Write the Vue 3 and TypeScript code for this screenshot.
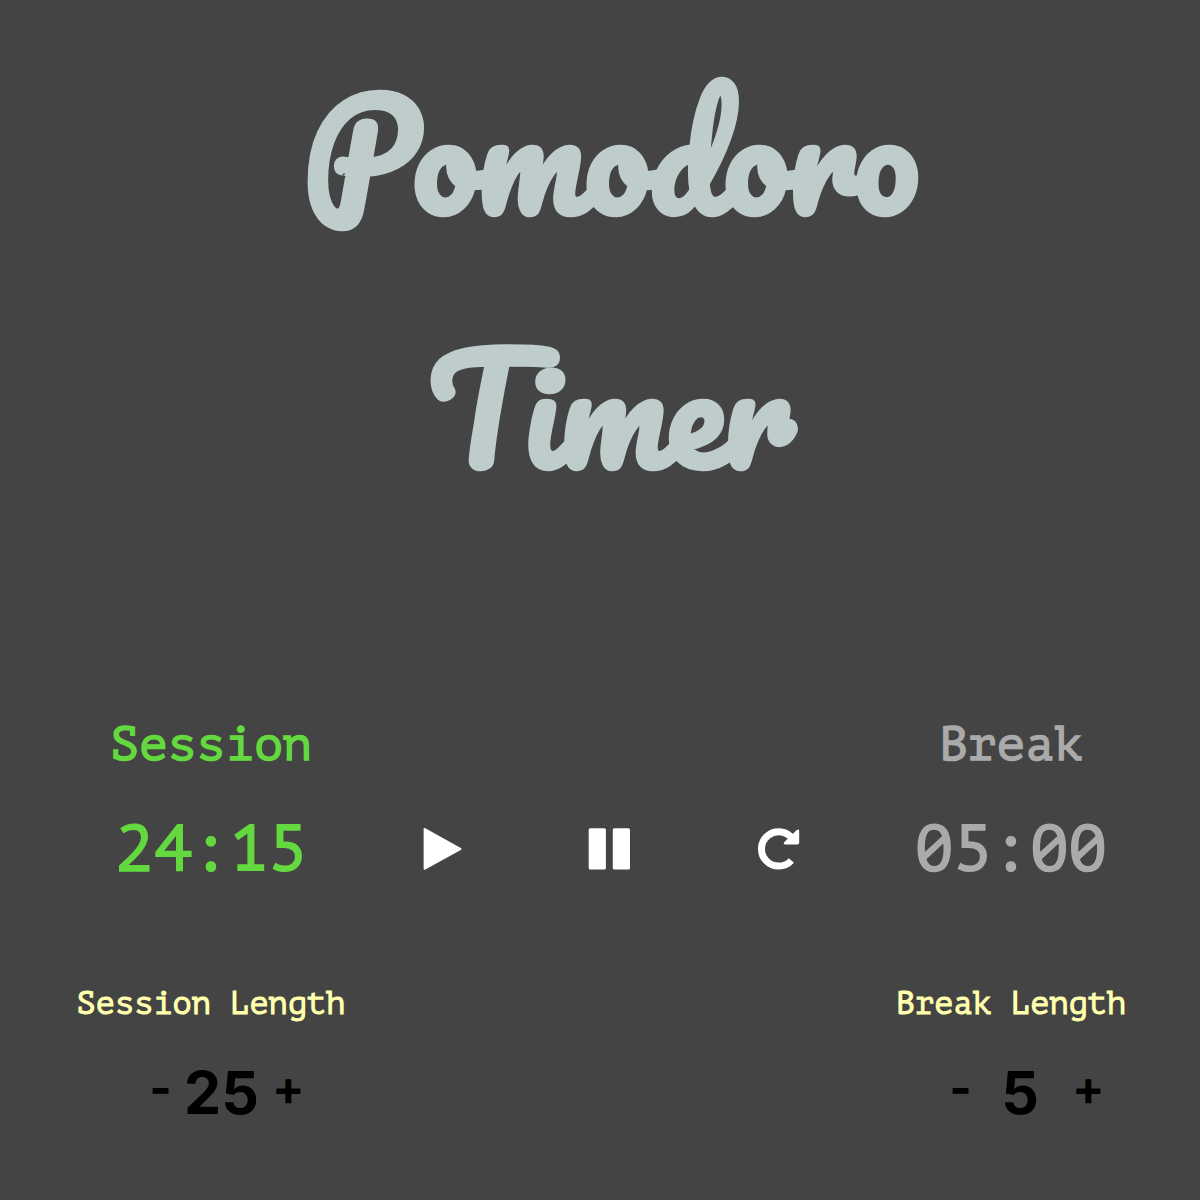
<script setup lang="ts">
import { ref } from 'vue'

const sessionTime = ref('24:15')
const breakTime = ref('05:00')
const sessionLength = ref(25)
const breakLength = ref(5)
</script>

<template>
  <main class="app">
    <h1 class="title">Pomodoro<br />Timer</h1>

    <section class="timers">
      <div class="timer active">
        <h2>Session</h2>
        <div class="clock">{{ sessionTime }}</div>
      </div>
      <div class="controls">
        <button aria-label="Start">
          <svg width="42" height="44" viewBox="0 0 42 44"><path d="M1.6 2.2Q1.6 .4 3.3 1.2L38.8 20.9Q40.6 22 38.8 23.1L3.3 42.4Q1.6 43.2 1.6 41.4Z" /></svg>
        </button>
        <button aria-label="Pause">
          <svg width="46" height="44" viewBox="0 0 46 44"><rect x=".7" y="1.2" width="17.2" height="41.4" rx="1.6" /><rect x="24.8" y="1.2" width="17.2" height="41.4" rx="1.6" /></svg>
        </button>
        <button aria-label="Reset">
          <svg width="44" height="44" viewBox="0 0 44 44">
            <path class="arc" d="M36 12.4A17.2 17.2 0 1 0 34.4 33.5" />
            <path d="M39.8 3.1Q42.2 1.4 42.2 4V15.8Q42.2 17.6 40.5 17.6H28.4Q25.6 17.4 27.4 15Z" />
          </svg>
        </button>
      </div>
      <div class="timer">
        <h2>Break</h2>
        <div class="clock">{{ breakTime }}</div>
      </div>
    </section>

    <section class="settings">
      <div class="setting">
        <h3>Session Length</h3>
        <div class="stepper">
          <button @click="sessionLength--">-</button>
          <span class="value">{{ sessionLength }}</span>
          <button @click="sessionLength++">+</button>
        </div>
      </div>
      <div class="setting">
        <h3>Break Length</h3>
        <div class="stepper">
          <button @click="breakLength--">-</button>
          <span class="value">{{ breakLength }}</span>
          <button @click="breakLength++">+</button>
        </div>
      </div>
    </section>
  </main>
</template>

<style>
body {
  background: #444;
}
</style>

<style scoped>
.app {
  width: 1200px;
  height: 1200px;
  overflow: hidden;
  background: #444;
  font-family: "PT Mono", "DejaVu Sans Mono", monospace;
}
.title {
  margin: 0;
  height: 700px;
  padding: 26px 0 0 22px;
  box-sizing: border-box;
  font-family: Pacifico, cursive;
  font-size: 144px;
  line-height: 254px;
  font-weight: 700;
  text-align: center;
  color: #bfcccc;
}
.timers {
  display: flex;
  height: 270px;
}
.timer {
  width: 422px;
  color: #aaa;
  text-align: center;
}
.timer:last-child {
  width: 378px;
}
.active {
  color: #64d93f;
}
h2 {
  margin: 15px 0 0;
  font-size: 48px;
  line-height: 60px;
  font-weight: 700;
}
.clock {
  margin-top: 34px;
  font-size: 64px;
  line-height: 80px;
  font-weight: 700;
}
.controls {
  display: flex;
  justify-content: space-between;
  align-items: flex-start;
  width: 400px;
  padding: 127px 21px 0 0;
  box-sizing: border-box;
}
button {
  padding: 0;
  border: 0;
  background: none;
  color: #000;
}
.controls svg {
  display: block;
  fill: #fff;
}
.controls .arc {
  fill: none;
  stroke: #fff;
  stroke-width: 7;
}
.settings {
  display: flex;
  justify-content: space-between;
}
.setting {
  width: 422px;
}
.setting:last-child {
  width: 378px;
}
h3 {
  margin: 14px 0 0;
  font-size: 32px;
  line-height: 40px;
  font-weight: 700;
  text-align: center;
  color: #ffffad;
}
.stepper {
  display: flex;
  width: 154px;
  height: 80px;
  margin: 29px 0 0 149px;
  align-items: center;
}
.setting:last-child .stepper {
  margin-left: 127px;
}
.stepper button {
  width: 23px;
  height: 80px;
  padding-bottom: 11px;
  font: 700 48px/69px Inter, sans-serif;
}
.stepper button:last-child {
  width: 31px;
  margin-left: auto;
}
/* Fixed-width number field, trims a two-digit value at its right edge */
.value {
  width: 72px;
  margin-left: 12px;
  overflow: hidden;
  font: 700 59px/80px Inter, sans-serif;
  text-align: center;
}
</style>
